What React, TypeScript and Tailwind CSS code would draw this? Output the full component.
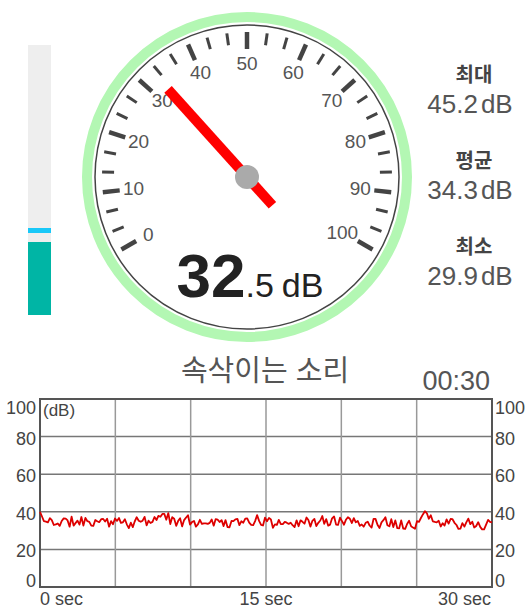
import { useMemo } from "react";

// gauge geometry (local svg coords)
const CX = 165;
const CY = 165;
const START = -120; // degrees from top for 0 dB
const SWEEP = 240;

function polar(r: number, deg: number) {
    const a = (deg * Math.PI) / 180;
    return { x: CX + r * Math.sin(a), y: CY - r * Math.cos(a) };
}

function mulberry32(seed: number) {
    return function () {
        let t = (seed += 0x6d2b79f5);
        t = Math.imul(t ^ (t >>> 15), t | 1);
        t ^= t + Math.imul(t ^ (t >>> 7), t | 61);
        return ((t ^ (t >>> 14)) >>> 0) / 4294967296;
    };
}

function Gauge({ value }: { value: number }) {
    const ticks = [];
    for (let i = 0; i <= 30; i++) {
        const deg = START + i * 8;
        const major = i % 3 === 0;
        const a = polar(major ? 128 : 133, deg);
        const b = polar(145, deg);
        ticks.push(
            <line
                key={i}
                x1={a.x}
                y1={a.y}
                x2={b.x}
                y2={b.y}
                stroke="#444"
                strokeWidth={major ? 4.5 : 3}
            />
        );
    }

    const labels = [0, 10, 20, 30, 40, 50, 60, 70, 80, 90, 100].map(v => {
        const p = polar(v === 100 ? 110 : 114, START + (v / 100) * SWEEP);
        return (
            <text
                key={v}
                x={p.x}
                y={p.y}
                textAnchor="middle"
                dominantBaseline="central"
                fontSize={19}
                fill="#555"
            >
                {v}
            </text>
        );
    });

    const needleDeg = START + (value / 100) * SWEEP;
    const tip = polar(118, needleDeg);
    const tail = polar(-38, needleDeg);

    return (
        <svg width={330} height={330} viewBox="0 0 330 330" className="block shrink-0">
            <circle cx={CX} cy={CY} r={160} fill="white" stroke="#b3f7b3" strokeWidth={10} />
            <circle cx={CX} cy={CY} r={152} fill="white" stroke="#444" strokeWidth={1.5} />
            {ticks}
            {labels}
            <text x={168} y={285} textAnchor="middle" fill="#222">
                <tspan fontSize={62} fontWeight={700}>32</tspan>
                <tspan fontSize={34}>.5</tspan>
                <tspan fontSize={34} dx={8}>dB</tspan>
            </text>
            <line x1={tail.x} y1={tail.y} x2={tip.x} y2={tip.y} stroke="#ff0000" strokeWidth={10} />
            <circle cx={CX} cy={CY} r={12} fill="#aaaaaa" />
        </svg>
    );
}

function Stat({ label, value }: { label: string; value: string }) {
    return (
        <div className="flex flex-col items-center">
            <div className="text-[20px] leading-[19px] font-bold text-[#444] pl-[8px]">{label}</div>
            <div className="mt-[6px] text-[26px] leading-[26px] text-[#555]">
                {value}
                <span className="ml-[3px]">dB</span>
            </div>
        </div>
    );
}

function HistoryChart() {
    const L = 40;
    const R = 492;
    const T = 4;
    const B = 192;
    const toY = (v: number) => B - (v / 100) * (B - T);

    const points = useMemo(() => {
        const rnd = mulberry32(11);
        const n = 230;
        const pts: string[] = [];
        let base = 34.5;
        for (let i = 0; i < n; i++) {
            const x = L + (i / (n - 1)) * (R - L);
            base += (rnd() - 0.5) * 1.0;
            base += (34.8 - base) * 0.1;
            let v = base + (rnd() - 0.5) * 5.5;
            if (i < 3) v = 40 - i * 2.5;
            // a couple of short peaks
            const p1 = Math.max(0, 1 - Math.abs(i - 62) / 5);
            const p2 = Math.max(0, 1 - Math.abs(i - 195) / 4);
            v += p1 * 4.5 + p2 * 5;
            pts.push(`${x.toFixed(1)},${toY(v).toFixed(1)}`);
        }
        return pts.join(" ");
    }, []);

    const rows = [0, 1, 2, 3, 4, 5].map(k => T + (k * (B - T)) / 5);
    const cols = [0, 1, 2, 3, 4, 5, 6].map(k => L + (k * (R - L)) / 6);
    const yLabels = [
        { t: "100", y: 19 },
        { t: "80", y: 50 },
        { t: "60", y: 87 },
        { t: "40", y: 125 },
        { t: "20", y: 162 },
        { t: "0", y: 192 },
    ];

    return (
        <svg width={530} height={220} viewBox="0 0 530 220" className="block">
            {rows.slice(1, 5).map(y => (
                <line key={y} x1={L} x2={R} y1={y} y2={y} stroke="#777" strokeWidth={1.5} />
            ))}
            {cols.slice(1, 6).map(x => (
                <line key={x} x1={x} x2={x} y1={T} y2={B} stroke="#999" strokeWidth={1.5} />
            ))}
            <rect x={L} y={T} width={R - L} height={B - T} fill="none" stroke="#555" strokeWidth={2} />
            <polyline points={points} fill="none" stroke="#dd0000" strokeWidth={1.8} strokeLinejoin="round" />
            <text x={43} y={21} fontSize={17} fill="#444">(dB)</text>
            {yLabels.map(l => (
                <text key={"l" + l.t} x={36} y={l.y} fontSize={18} fill="#444" textAnchor="end">{l.t}</text>
            ))}
            {yLabels.map(l => (
                <text key={"r" + l.t} x={495} y={l.y} fontSize={18} fill="#444">{l.t}</text>
            ))}
            <text x={40} y={210} fontSize={18} fill="#444">0 sec</text>
            <text x={266} y={210} fontSize={18} fill="#444" textAnchor="middle">15 sec</text>
            <text x={491} y={210} fontSize={18} fill="#444" textAnchor="end">30 sec</text>
        </svg>
    );
}

export default function App() {
    return (
        <div className="w-[530px] h-[615px] overflow-hidden bg-white font-['Liberation_Sans','Noto_Sans_CJK_KR',sans-serif]">
            <div className="flex">
                <div className="ml-[28px] mt-[45px] w-[23px] h-[270px] bg-[#eeeeee] flex flex-col shrink-0">
                    <div className="flex-1" />
                    <div className="h-[5px] bg-[#19c8f8]" />
                    <div className="h-[9px]" />
                    <div className="h-[73px] bg-[#00b5a5]" />
                </div>
                <div className="ml-[31px] mt-[12px]">
                    <Gauge value={32.5} />
                </div>
                <div className="flex-1 flex flex-col items-center mt-[66px] gap-[35px] pr-[2px]">
                    <Stat label="최대" value="45.2" />
                    <Stat label="평균" value="34.3" />
                    <Stat label="최소" value="29.9" />
                </div>
            </div>
            <div className="grid grid-cols-[1fr_auto_1fr] mt-[11px] h-[42px]">
                <div />
                <div className="text-[29px] leading-[36px] text-[#555]">속삭이는 소리</div>
                <div className="justify-self-end pr-[40px] mt-[15px] text-[27px] leading-[27px] text-[#555]">00:30</div>
            </div>
            <HistoryChart />
        </div>
    );
}
